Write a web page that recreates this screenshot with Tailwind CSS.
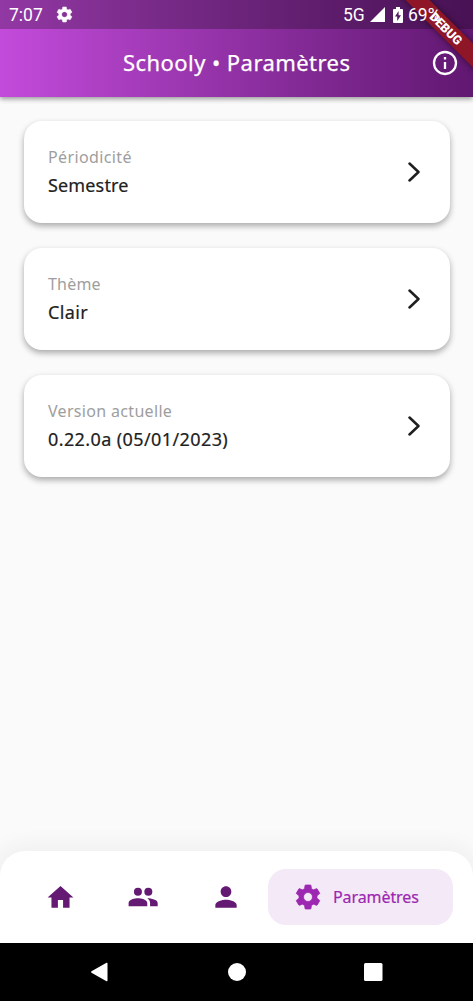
<!DOCTYPE html>
<html lang="fr">
<head>
<meta charset="utf-8">
<title>Schooly</title>
<script src="https://cdn.jsdelivr.net/npm/@tailwindcss/browser@4"></script>
</head>
<body class="w-[473px] h-[1001px] overflow-hidden bg-[#fafafa] font-['Noto_Sans',sans-serif] relative flex flex-col">
<svg class="hidden">
  <symbol id="gear" viewBox="0 0 24 24"><path stroke="currentColor" stroke-width=".6" d="M19.14 12.94c.04-.3.06-.61.06-.94 0-.32-.02-.64-.07-.94l2.03-1.58a.49.49 0 00.12-.61l-1.92-3.32a.488.488 0 00-.59-.22l-2.39.96c-.5-.38-1.03-.7-1.62-.94l-.36-2.54a.484.484 0 00-.48-.41h-3.84c-.24 0-.43.17-.47.41l-.36 2.54c-.59.24-1.13.57-1.62.94l-2.39-.96c-.22-.08-.47 0-.59.22L2.74 8.87c-.12.21-.08.47.12.61l2.03 1.58c-.05.3-.09.63-.09.94s.02.64.07.94l-2.03 1.58a.49.49 0 00-.12.61l1.92 3.32c.12.22.37.29.59.22l2.39-.96c.5.38 1.03.7 1.62.94l.36 2.54c.05.24.24.41.48.41h3.84c.24 0 .44-.17.47-.41l.36-2.54c.59-.24 1.13-.56 1.62-.94l2.39.96c.22.08.47 0 .59-.22l1.92-3.32c.12-.22.07-.47-.12-.61l-2.01-1.58zM12 15.6c-1.98 0-3.6-1.62-3.6-3.6s1.62-3.6 3.6-3.6 3.6 1.62 3.6 3.6-1.62 3.6-3.6 3.6z"/></symbol>
  <symbol id="chev" viewBox="0 0 12 20"><path d="M1.500 1.500 10.500 10l-9 8.500" fill="none" stroke="#1f1f21" stroke-width="2.500" stroke-linecap="round" stroke-linejoin="round"/></symbol>
</svg>
<header class="h-[97px] shrink-0 bg-linear-to-r from-[#c34bdb] to-[#611871] text-white shadow-[0_2px_5px_rgba(0,0,0,0.4)] flex flex-col">
  <div class="h-[29px] bg-black/25 flex items-center pl-[9px] font-[Roboto] text-[17.5px]">
    <span class="w-[46px] pt-[2px]">7:07</span>
    <svg class="size-[19px] fill-white"><use href="#gear"/></svg>
    <span class="ml-[269px] w-[27px] pt-[1px]">5G</span>
    <svg class="w-[15px] h-[15px] fill-white" viewBox="0 0 15 15"><path d="M15 0v15H0z"/></svg>
    <svg class="ml-[8px] w-[10px] h-[16px] fill-white" viewBox="0 0 10 16"><path fill-rule="evenodd" d="M3 0h4v2h2q1 0 1 1v12q0 1-1 1H1q-1 0-1-1V3q0-1 1-1h2zM5.600 4 2 9.500h2.200V14L8 8.300H5.600z"/></svg>
    <span class="ml-[5px] pt-[2px] relative z-20">69%</span>
  </div>
  <div class="h-[68px] flex items-center justify-end pr-[15px]">
    <h1 class="w-[228px] mr-[81px] mt-[-1px] text-[22px] font-[450] tracking-[0.44px] [-webkit-text-stroke:0.25px_white] whitespace-nowrap">Schooly • Paramètres</h1>
    <svg class="size-[26px] shrink-0" viewBox="0 0 26 26" fill="none" stroke="#fff" stroke-width="2.300"><circle cx="13" cy="13" r="11"/><path d="M13 12v7M13 7v2.500"/></svg>
  </div>
</header>
<div class="absolute z-10 top-0 right-0 w-[80px] h-[80px] overflow-hidden">
  <div class="absolute left-[-17px] top-[20px] w-[140px] h-[17px] rotate-45 bg-[#8f1626] shadow-[0_0_7px_rgba(0,0,0,0.5)] text-white font-[Roboto] font-black text-[12.5px] leading-[18px] text-center">DEBUG</div>
</div>
<main class="flex-1 pl-[24px] pr-[23px] pt-[24px] flex flex-col gap-[25px]">
  <section class="h-[102px] rounded-[18px] bg-white shadow-[0_3px_6px_rgba(0,0,0,0.33)] px-[24px] flex items-center justify-between">
    <div class="pb-[2px]"><p class="text-[16px] leading-[28px] tracking-[0.38px] text-[#9e9e9e]">Périodicité</p><p class="text-[18px] leading-[28px] font-[450] tracking-[0.15px] text-[#212121] [-webkit-text-stroke:0.2px_#212121]">Semestre</p></div>
    <svg class="w-[12px] h-[20px] mr-[6px]"><use href="#chev"/></svg>
  </section>
  <section class="h-[102px] rounded-[18px] bg-white shadow-[0_3px_6px_rgba(0,0,0,0.33)] px-[24px] flex items-center justify-between">
    <div class="pb-[2px]"><p class="text-[16px] leading-[28px] tracking-[0.2px] text-[#9e9e9e]">Thème</p><p class="text-[18px] leading-[28px] font-[450] tracking-[0.4px] text-[#212121] [-webkit-text-stroke:0.2px_#212121]">Clair</p></div>
    <svg class="w-[12px] h-[20px] mr-[6px]"><use href="#chev"/></svg>
  </section>
  <section class="h-[102px] rounded-[18px] bg-white shadow-[0_3px_6px_rgba(0,0,0,0.33)] px-[24px] flex items-center justify-between">
    <div class="pb-[2px]"><p class="text-[16px] leading-[28px] tracking-[0.32px] text-[#9e9e9e]">Version actuelle</p><p class="text-[18px] leading-[28px] font-[450] tracking-[0.4px] text-[#212121] [-webkit-text-stroke:0.2px_#212121]">0.22.0a (05/01/2023)</p></div>
    <svg class="w-[12px] h-[20px] mr-[6px]"><use href="#chev"/></svg>
  </section>
</main>
<nav class="h-[92px] shrink-0 bg-white rounded-t-[25px] shadow-[0_0_20px_8px_rgba(0,0,0,0.04)] flex items-center pl-[45px] fill-[#641a72]">
  <svg class="size-[31px]" viewBox="0 0 24 24"><path d="M10 20v-6h4v6h5v-8h3L12 3 2 12h3v8z"/></svg>
  <svg class="ml-[51px] size-[32px]" viewBox="0 0 24 24"><circle cx="8.200" cy="8" r="3"/><circle cx="16" cy="8" r="3"/><path d="M1.200 19v-2.500C1.200 14 6 13 8.200 13S15.200 14 15.200 16.500V19zM15.200 13c3 0 7.800 1.100 7.800 3.500V19h-5.700v-2.500c0-1.500-.8-2.700-2.100-3.500z"/></svg>
  <svg class="ml-[51px] size-[32px]" viewBox="0 0 24 24"><path d="M12 12c2.210 0 4-1.790 4-4s-1.790-4-4-4-4 1.790-4 4 1.790 4 4 4zm0 2c-2.670 0-8 1.340-8 4v2h16v-2c0-2.660-5.330-4-8-4z"/></svg>
  <div class="ml-[26px] w-[185px] h-[56px] rounded-[18px] bg-[#f4e9f7] flex items-center pl-[25px] gap-[10px] text-[#9c27b0] fill-[#9c27b0]">
    <svg class="size-[30px]"><use href="#gear"/></svg><span class="text-[16px] tracking-[-0.08px] [-webkit-text-stroke:0.2px_#9c27b0]">Paramètres</span>
  </div>
</nav>
<footer class="h-[58px] shrink-0 bg-black">
  <svg class="w-[473px] h-[58px] fill-white" viewBox="0 0 473 58"><path d="M91.500 28.200 106.500 19.800q1-.5 1 .6v17.200q0 1-1 .6L91.500 29.800q-1-.8 0-1.600z"/><circle cx="237" cy="29" r="9"/><rect x="364" y="20" width="18.500" height="18" rx="1.500"/></svg>
</footer>
</body>
</html>
